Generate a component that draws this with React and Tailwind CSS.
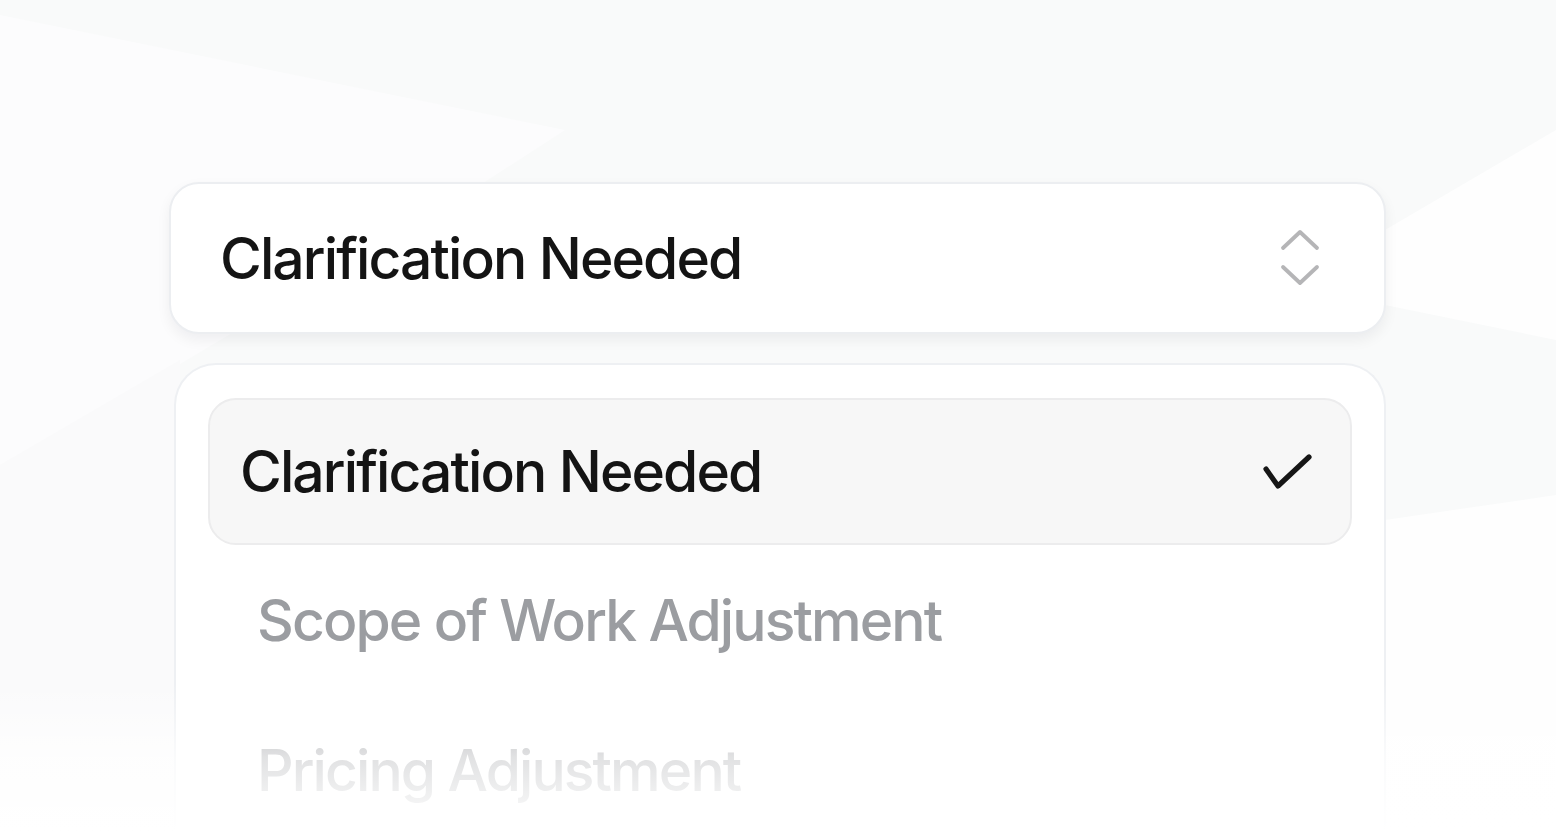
import React from 'react'

const options = [
  { label: 'Clarification Needed', state: 'selected' },
  { label: 'Scope of Work Adjustment', state: 'idle' },
  { label: 'Pricing Adjustment', state: 'idle' },
]

function UpDownIcon() {
  return (
    <svg width="40" height="58" viewBox="0 0 40 58" fill="none" stroke="#b5b5b7" strokeWidth="3.8" strokeLinecap="round" strokeLinejoin="round">
      <path d="M3 19 L20 3 L37 19" />
      <path d="M3 38 L20 54 L37 38" />
    </svg>
  )
}

function CheckIcon() {
  return (
    <svg width="52" height="40" viewBox="0 0 52 40" fill="none" stroke="#161616" strokeWidth="5.2" strokeLinecap="round" strokeLinejoin="round">
      <path d="M4 17 L16 34 L47 5" />
    </svg>
  )
}

export default function App() {
  return (
    <div
      className="relative w-full h-[832px] overflow-hidden bg-[#f9fafa]"
      style={{ fontFamily: 'Inter, "Noto Sans", sans-serif' }}
    >
      {/* faint background facets */}
      <svg className="absolute inset-0" width="1556" height="832" viewBox="0 0 1556 832">
        <polygon points="0,15 565,130 480,185 170,370 0,465" fill="#fcfcfd" />
        <polygon points="1556,130 1385,230 1385,305 1556,340" fill="#fefefe" />
        <polygon points="1385,520 1556,495 1556,832 1385,832" fill="#fefefe" />
        <polygon points="0,465 180,360 180,832 0,832" fill="#fafafb" />
      </svg>

      <div className="relative pt-[182px] pl-[169px] w-[1386px]">
        {/* Trigger */}
        <div className="h-[152px] rounded-[30px] border-2 border-[#eceef1] bg-white shadow-[0_6px_14px_rgba(15,23,42,0.06)] flex items-center justify-between pl-[49px] pr-[64px]">
          <span className="text-[57px] font-medium leading-none tracking-[-1.9px] text-[#141414]">Clarification Needed</span>
          <UpDownIcon />
        </div>

        {/* Listbox */}
        <div className="mt-[29px] ml-[5px] h-[520px] rounded-t-[42px] border-2 border-b-0 border-[#eef0f3] bg-white px-[32px] pt-[33px]">
          {options.map((o) =>
            o.state === 'selected' ? (
              <div
                key={o.label}
                className="h-[147px] rounded-[28px] border-2 border-[#ececed] bg-[#f7f7f7] flex items-center justify-between pl-[30px] pr-[36px]"
              >
                <span className="text-[57px] font-medium leading-none tracking-[-1.9px] text-[#141414]">{o.label}</span>
                <CheckIcon />
              </div>
            ) : (
              <div key={o.label} className="h-[150px] flex items-center pl-[49px]">
                <span className="text-[57px] font-medium leading-none tracking-[-1.9px] text-[#9b9da1]">{o.label}</span>
              </div>
            )
          )}
        </div>
      </div>

      {/* bottom fade */}
      <div className="absolute left-0 right-0 bottom-0 h-[150px] bg-gradient-to-b from-white/0 via-white/70 to-white" />
    </div>
  )
}
